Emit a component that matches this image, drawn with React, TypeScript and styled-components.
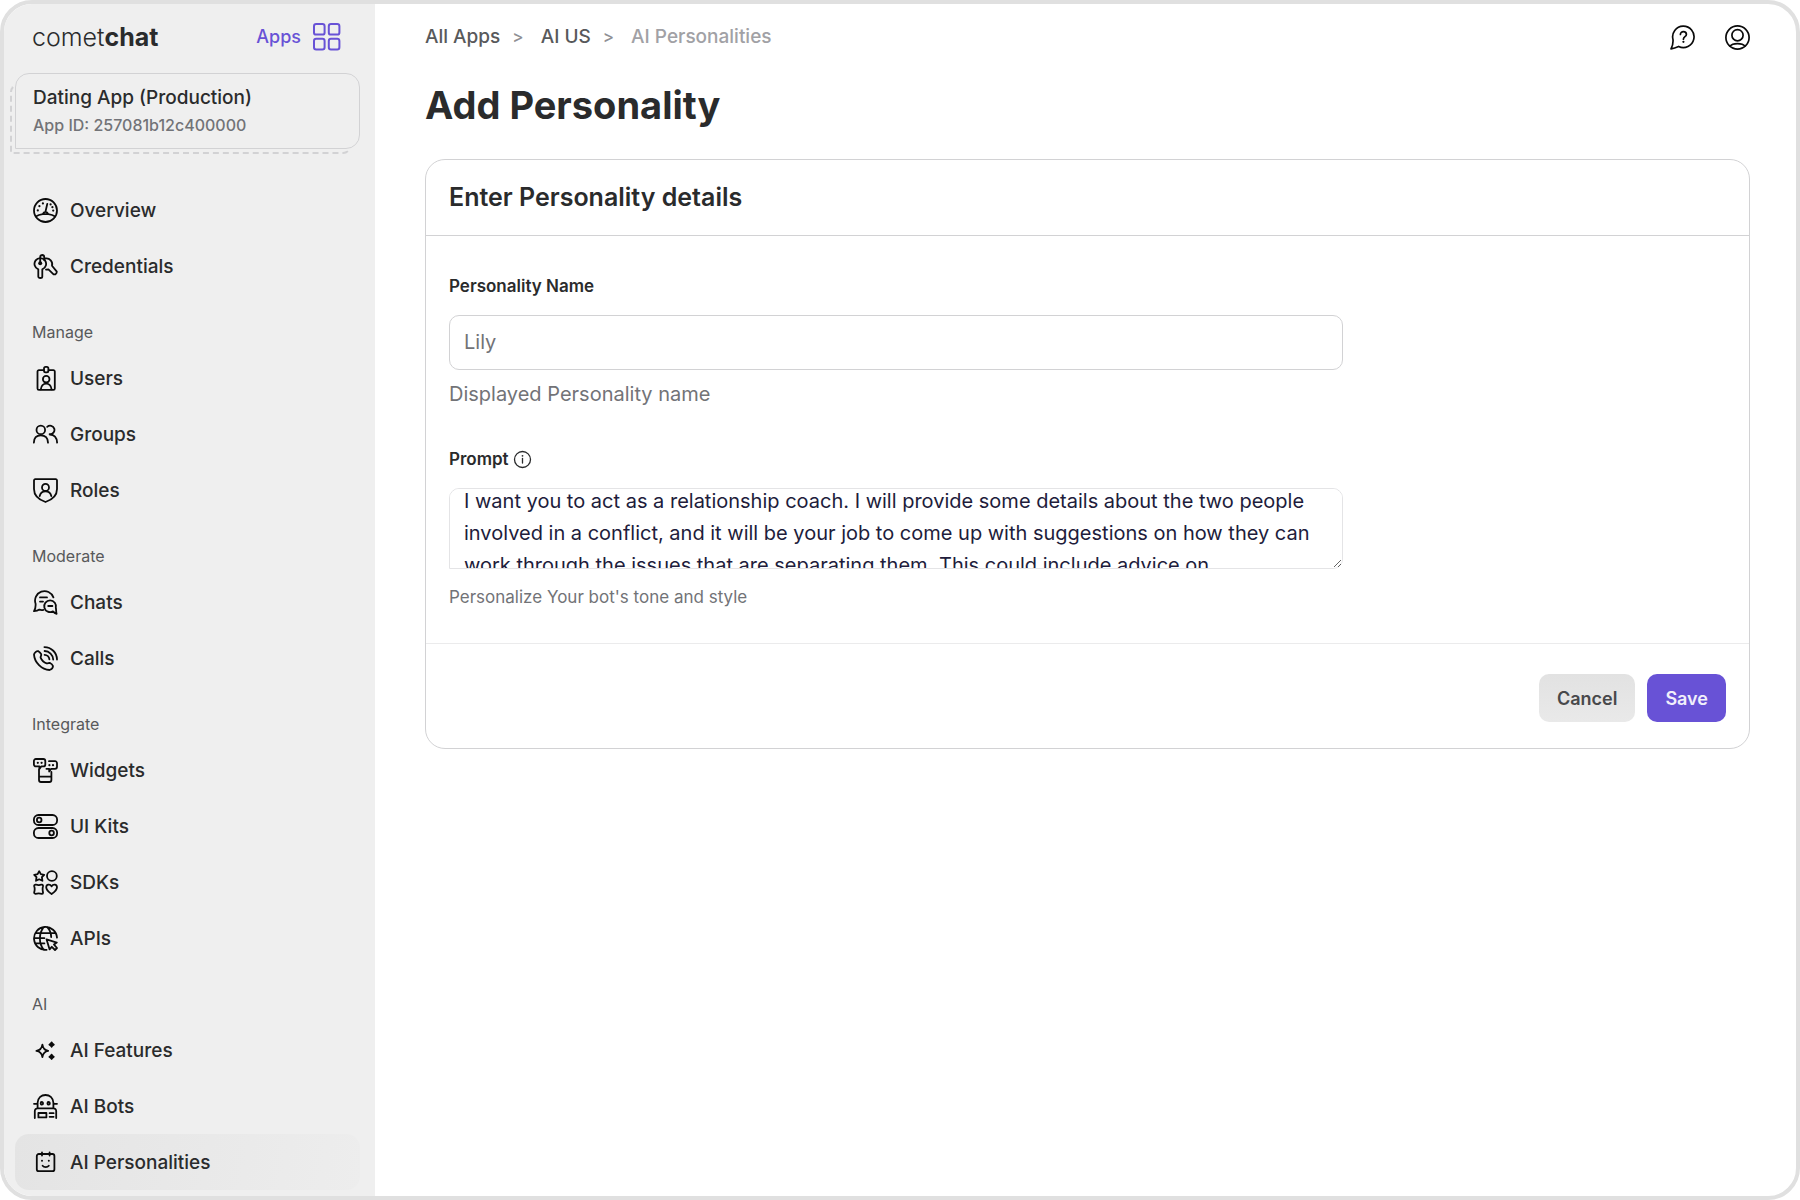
import React, { useEffect, useRef } from 'react';
import styled, { createGlobalStyle } from 'styled-components';

const colors = {
  frame: '#e0e0e0',
  side: '#efefef',
  ink: '#2a2b2c',
  crumb: '#58595b',
  muted: '#727377',
  faint: '#a1a1a5',
  line: '#d2d2d4',
  purple: '#6852d6',
};

const GlobalStyle = createGlobalStyle`
  *, *::before, *::after { box-sizing: border-box; }
  body {
    margin: 0;
    background: #fff;
    color: ${colors.ink};
    font-family: Inter, "Liberation Sans", sans-serif;
  }
  h1, h2, p, ul, ol { margin: 0; padding: 0; }
  ul, ol { list-style: none; }
  a { color: inherit; text-decoration: none; }
  button, input, textarea { font: inherit; }
`;

const Frame = styled.div`
  display: flex;
  min-height: 100vh;
  border: 4px solid ${colors.frame};
  border-radius: 32px;
  overflow: hidden;
`;

const Sidebar = styled.aside`
  flex: 0 0 371px;
  background: ${colors.side};
  padding: 0 15px 5px 11px;
`;

const Brand = styled.div`
  display: flex;
  align-items: center;
  justify-content: space-between;
  height: 65px;
  padding: 0 19px 0 17px;
`;

const Logo = styled.a`
  font-size: 25px;
  line-height: 32px;
  font-weight: 300;

  strong { font-weight: 700; }
`;

const AppsLink = styled.a`
  display: flex;
  align-items: center;
  gap: 12px;
  font-size: 18px;
  font-weight: 500;
  color: ${colors.purple};
`;

const AppCard = styled.div`
  position: relative;
  height: 76px;
  margin-top: 4px;
  padding: 11px 17px;
  border: 1px solid ${colors.line};
  border-radius: 14px 14px 14px 0;

  &::before {
    content: '';
    position: absolute;
    top: 10px;
    right: 8px;
    bottom: -6px;
    left: -6px;
    border: 2px dashed ${colors.line};
    border-top-color: transparent;
    border-right-color: transparent;
    border-radius: 8px 0 8px 0;
    clip-path: polygon(0 0, 5px 0, 5px 64px, 100% 64px, 100% 100%, 0 100%);
  }
`;

const AppName = styled.p`
  font-size: 19px;
  line-height: 26px;
  font-weight: 500;
`;

const AppId = styled.p`
  font-size: 16px;
  line-height: 28px;
  font-weight: 500;
  color: ${colors.muted};
`;

const Nav = styled.nav`
  padding-top: 33px;
`;

const GroupLabel = styled.h2`
  height: 56px;
  padding: 20px 18px 0 17px;
  font-size: 16px;
  line-height: 36px;
  font-weight: 400;
  color: ${colors.crumb};
`;

const NavLink = styled.a<{ $active?: boolean }>`
  display: flex;
  align-items: center;
  gap: 12px;
  height: 56px;
  padding: 1px 18px 0;
  border-radius: 14px;
  font-size: 19px;
  line-height: 24px;
  font-weight: 500;
  background: ${(p) => (p.$active ? 'linear-gradient(100deg, #e4e4e4, #ededed)' : 'none')};
`;

const Icon = styled.svg`
  flex: none;
  fill: none;
  stroke: currentColor;
  stroke-width: 1.7;
  stroke-linecap: round;
  stroke-linejoin: round;

  .dot { fill: currentColor; stroke: none; }
`;

const NavIcon = styled(Icon)`
  color: #0b0b0b;
  stroke-width: 1.8;
`;

const AppsIcon = styled(Icon)`
  stroke-width: 2;
`;

const InfoIcon = styled(Icon)`
  stroke-width: 1.3;
`;

const Main = styled.main`
  flex: 1;
  min-width: 0;
  padding: 0 46px 40px 50px;
`;

const TopBar = styled.header`
  display: flex;
  align-items: center;
  justify-content: space-between;
  height: 66px;
`;

const Crumbs = styled.ol`
  display: flex;
  align-items: center;
  gap: 17px;
  font-size: 19px;
  line-height: 24px;
  font-weight: 500;
  color: ${colors.crumb};

  li { display: flex; gap: 12px; }
  li:not(:last-child)::after { content: '>'; font-size: 17px; color: #8f8f94; }
  [aria-current] { color: ${colors.faint}; }
`;

const Actions = styled.div`
  display: flex;
  gap: 30px;
`;

const IconButton = styled.button`
  display: flex;
  padding: 0;
  border: 0;
  background: none;
  color: #0b0b0b;
  cursor: pointer;
`;

const Title = styled.h1`
  margin: 11px 0 30px;
  font-size: 38px;
  line-height: 48px;
  font-weight: 700;
`;

const Card = styled.form`
  border: 1px solid ${colors.line};
  border-radius: 20px;
`;

const CardTitle = styled.h2`
  padding: 19px 23px 20px;
  border-bottom: 1px solid ${colors.line};
  font-size: 25px;
  line-height: 36px;
  font-weight: 600;
`;

const CardBody = styled.div`
  display: flex;
  flex-direction: column;
  gap: 41px;
  padding: 38px 23px 34px;
`;

const Field = styled.div`
  display: flex;
  flex-direction: column;
  width: 70%;
`;

const LabelRow = styled.div`
  display: flex;
  align-items: center;
  gap: 4px;
  margin-bottom: 17px;
`;

const Label = styled.label`
  font-size: 17px;
  line-height: 24px;
  font-weight: 600;
`;

const TextInput = styled.input`
  height: 55px;
  padding: 0 14px 2px;
  border: 1px solid ${colors.line};
  border-radius: 10px;
  background: #fff;
  font-size: 20px;

  &::placeholder { color: ${colors.muted}; opacity: 1; }
`;

const PromptArea = styled.textarea`
  display: block;
  height: 81px;
  padding: 12px 14px;
  border: 1px solid #e4e4e6;
  border-radius: 10px 10px 10px 0;
  background: #fff;
  font-size: 20px;
  line-height: 32px;
  color: #211c3b;
  scrollbar-width: none;
  resize: vertical;
`;

const Help = styled.p<{ $large?: boolean }>`
  margin-top: ${(p) => (p.$large ? '12px' : '16px')};
  font-size: ${(p) => (p.$large ? '20px' : '17px')};
  line-height: 24px;
  color: ${colors.muted};
`;

const CardFooter = styled.footer`
  display: flex;
  justify-content: flex-end;
  gap: 12px;
  padding: 30px 23px 26px;
  border-top: 1px solid #ebebec;
`;

const Button = styled.button<{ $primary?: boolean }>`
  height: 48px;
  padding: 0 18px;
  border: 0;
  border-radius: 10px;
  font-size: 18px;
  font-weight: 600;
  color: ${(p) => (p.$primary ? '#f1effb' : '#48494b')};
  background: ${(p) => (p.$primary ? colors.purple : 'linear-gradient(#e2e2e2, #e9e9e9)')};
  cursor: pointer;
`;

const icons: Record<string, React.ReactNode> = {
  overview: (
    <>
      <circle cx="12.5" cy="12.5" r="11.5" />
      <path d="M2.8 18.4C5 17 7.4 16.4 9.7 16.1M22.2 18.4C20 17 17.6 16.4 15.3 16.1M9.7 16.1C11 13 14 13 15.3 16.1ZM12.5 13.6 14.3 5.8" />
      <g className="dot">
        <circle cx="4.8" cy="12.4" r="1.1" />
        <circle cx="6.4" cy="8.2" r="1.1" />
        <circle cx="9.9" cy="5.4" r="1.1" />
        <circle cx="17.6" cy="6.4" r="1.1" />
        <circle cx="19.4" cy="9.2" r="1.1" />
        <circle cx="20.2" cy="12.6" r="1.1" />
      </g>
    </>
  ),
  credentials: (
    <>
      <path d="M5.3 15.3A5.8 5.8 0 1 1 9.3 15.3V22.4Q9.3 24 7.3 24 5.3 24 5.3 22.4Z" />
      <path d="M12.4 4.5A5.8 5.8 0 0 1 19 11.8L23.8 17.6Q24 19 22.4 20.4L20.6 20.4 15.4 15.4 13 15.6" />
      <path d="M7.2 8.2V3Q7.4 1 9.3 1 11.2 1.2 11.2 3V6" />
      <circle className="dot" cx="7.2" cy="9.2" r="2" />
    </>
  ),
  users: (
    <>
      <path d="M10.8 4.2H5.9A1.4 1.4 0 0 0 4.5 5.6V22.4A1.4 1.4 0 0 0 5.9 23.8H20.4A1.4 1.4 0 0 0 21.8 22.4V5.6A1.4 1.4 0 0 0 20.4 4.2H15.6" />
      <rect x="11" y="0.9" width="4.4" height="5.4" rx="1.6" />
      <circle cx="13.2" cy="13.2" r="3.3" />
      <path d="M7.8 23.4C8.4 19 10.4 17.6 13.2 17.6S18 19 18.6 23.4" />
    </>
  ),
  groups: (
    <>
      <circle cx="7.8" cy="7.9" r="4.3" />
      <path d="M.9 20.6C1 15.8 3.6 13.4 7.8 13.4S14.8 15.8 15 20.6M14.2 4.8A4.3 4.3 0 1 1 16.6 12.2M16.8 12.6C21.6 12.6 23.8 15.6 24.1 20.6" />
    </>
  ),
  roles: (
    <>
      <path d="M2.2 1.2H22.8A1.2 1.2 0 0 1 24 2.4V11C24 17.6 19.6 21.6 12.5 24 5.4 21.6 1 17.6 1 11V2.4A1.2 1.2 0 0 1 2.2 1.2Z" />
      <circle cx="12.5" cy="9.4" r="3.5" />
      <path d="M6.7 18C7.4 14.8 9.6 13.3 12.5 13.3S17.6 14.8 18.3 18" />
    </>
  ),
  chats: (
    <>
      <path d="M20.4 7.4A9.4 9.4 0 0 0 2.6 13.8C2.8 16.6 2.4 18.8 1 21.2 3.4 21 5.2 20.4 6.4 19.6 8 20.2 9 20.2 10.4 19.8" />
      <path d="M22.8 17.8A5.9 5.9 0 1 0 20 21.4C21 22.6 22.2 23.4 23.6 23.8 22.8 21.6 23.4 20 22.8 17.8ZM7 7.4H14M7 11.6H10M15.2 16H19.4" />
    </>
  ),
  calls: (
    <path d="M11.4 1.1A12.6 12.6 0 0 1 24 13.6M11.6 5A8.8 8.8 0 0 1 20.2 13.5M11.6 8.8A5 5 0 0 1 16.4 13.4M5.4 5.2C6.4 5.8 7.6 7 8.2 8.2 8.6 9.6 7.4 10.4 7.6 11.6 8.6 14 11.2 16.6 13.6 17.4 14.8 17.6 15.8 16.8 17 17 18.6 17.8 19.4 18.6 20 20 20 21.8 18.4 23.4 16.6 24 8.6 23.6 1.6 16.6 1 8.6 1.2 6.8 3.4 4.8 5.4 5.2Z" />
  ),
  widgets: (
    <>
      <path d="M2.9 1H10.3A2 2 0 0 1 12.3 3V6.4A2 2 0 0 1 10.3 8.4H8.2L6.4 11V8.4H2.9A2 2 0 0 1 .9 6.4V3A2 2 0 0 1 2.9 1ZM16 3.2H22A2 2 0 0 1 24 5.2V8.8A2 2 0 0 1 22 10.8H18.2L16.2 13.6V10.8H13.4M6 11.2V22A2 2 0 0 0 8 24H16.4A2 2 0 0 0 18.4 22V14M6.2 18.6H18.2" />
      <g className="dot">
        <circle cx="4.8" cy="4.8" r="1.1" />
        <circle cx="8.6" cy="4.8" r="1.1" />
        <circle cx="16.4" cy="7.2" r="1.1" />
        <circle cx="20" cy="7.2" r="1.1" />
      </g>
    </>
  ),
  uikits: (
    <>
      <rect x="0.9" y="1" width="23.2" height="10" rx="4.6" />
      <rect x="0.9" y="14" width="23.2" height="10" rx="4.6" />
      <circle cx="6.2" cy="6" r="2.3" />
      <circle cx="18.6" cy="19" r="2.3" />
    </>
  ),
  sdks: (
    <>
      <path d="M6.2 1.2 7.8 4.2 11.2 4.8 8.9 7.2 9.4 10.8 6.2 9.3 3 10.8 3.5 7.2 1.2 4.8 4.6 4.2Z" />
      <circle cx="18.9" cy="6" r="4.9" />
      <path d="M2.4 14.6Q4 14.4 5.7 15.2 7.4 14.4 9 14.6 10.2 15 10 16.2 9.2 19 10 22.2 10.2 23.6 9 23.8 5.7 23 2.4 23.8 1 23.6 1.2 22.2 2.2 19 1.2 16.2 1 15 2.4 14.6ZM18.6 24C15.4 21.8 13.2 19.6 13.2 17.2 13.4 14.2 17 13.6 18.6 16.4 20.2 13.6 23.8 14.2 24 17.2 24 19.6 21.8 21.8 18.6 24Z" />
    </>
  ),
  apis: (
    <path d="M13.6 23.9A11.5 11.5 0 1 1 24 11.6M2.4 7.2H22.6M2 17.4H11.4M10.8 1.2C5.6 7.4 5.6 17.6 10.8 23.8M14.2 1.2C16.8 4 18.2 7.6 18.2 11M1 12.2H11.4M13.6 13.4 23.8 16.6 21 18.6 24 22 22 24 18.8 20.8 16.6 23.4Z" />
  ),
  features: (
    <>
      <path d="M9.4 6.6C10 10.6 11.4 12.2 15.2 12.8 11.4 13.4 10 15 9.4 19 8.8 15 7.4 13.4 3.4 12.8 7.4 12.2 8.8 10.6 9.4 6.6Z" />
      <path fill="currentColor" d="M18.6 4.4Q19.2 6 20.8 6.6 19.2 7.2 18.6 8.8 18 7.2 16.4 6.6 18 6 18.6 4.4ZM18.6 16.6Q19.2 18.2 20.8 18.8 19.2 19.4 18.6 21 18 19.4 16.4 18.8 18 18.2 18.6 16.6Z" />
    </>
  ),
  bots: (
    <path d="M4.6 13.6V8.8C5 3.6 8.4 1 12.5 1S20 3.6 20.4 8.8V13.6M1 9.8H4.4M20.6 9.8H24M1.8 24V17A2.6 2.6 0 0 1 4.4 14.4H20.6A2.6 2.6 0 0 1 23.2 17V24M5.4 19H13.4V23.4H5.4ZM16.6 19.2H20.6M16.6 22.8H20.6M8.8 8A1.2 1.3 0 1 0 8.9 10.6 1.2 1.3 0 1 0 8.8 8ZM15.6 8A1.2 1.3 0 1 0 15.7 10.6 1.2 1.3 0 1 0 15.6 8Z" />
  ),
  personalities: (
    <>
      <rect x="3.8" y="4" width="17.6" height="17.2" rx="2" />
      <path d="M9 2.4V5.6M16.6 2.4V5.6M9.6 15.8C11 17.6 14.4 17.6 15.8 15.8" />
      <circle className="dot" cx="9" cy="10.8" r="1" />
      <circle className="dot" cx="15.8" cy="10.8" r="1" />
    </>
  ),
};

const sections = [
  { items: [['overview', 'Overview'], ['credentials', 'Credentials']] },
  { label: 'Manage', items: [['users', 'Users'], ['groups', 'Groups'], ['roles', 'Roles']] },
  { label: 'Moderate', items: [['chats', 'Chats'], ['calls', 'Calls']] },
  { label: 'Integrate', items: [['widgets', 'Widgets'], ['uikits', 'UI Kits'], ['sdks', 'SDKs'], ['apis', 'APIs']] },
  { label: 'AI', items: [['features', 'AI Features'], ['bots', 'AI Bots'], ['personalities', 'AI Personalities']] },
];

const prompt =
  'I want you to act as a relationship coach. I will provide some details about the two people involved in a conflict, and it will be your job to come up with suggestions on how they can work through the issues that are separating them. This could include advice on communication techniques or different strategies for improving their understanding of one another.';

export default function App() {
  const area = useRef<HTMLTextAreaElement>(null);

  useEffect(() => {
    if (area.current) area.current.scrollTop = 16;
  }, []);

  return (
    <>
      <GlobalStyle />
      <Frame>
        <Sidebar>
          <Brand>
            <Logo href="#">comet<strong>chat</strong></Logo>
            <AppsLink href="#apps">
              Apps
              <AppsIcon width="28" height="28" viewBox="0 0 28 28" aria-hidden="true">
                <rect x="1" y="1" width="10.6" height="10.6" rx="2.2" />
                <rect x="15.8" y="1" width="10.6" height="10.6" rx="2.2" />
                <rect x="1" y="15.8" width="10.6" height="10.6" rx="2.2" />
                <rect x="15.8" y="15.8" width="10.6" height="10.6" rx="2.2" />
              </AppsIcon>
            </AppsLink>
          </Brand>
          <AppCard>
            <AppName>Dating App (Production)</AppName>
            <AppId>App ID: 257081b12c400000</AppId>
          </AppCard>
          <Nav>
            {sections.map((section) => (
              <section key={section.label ?? 'top'}>
                {section.label && <GroupLabel>{section.label}</GroupLabel>}
                <ul>
                  {section.items.map(([id, text]) => (
                    <li key={id}>
                      <NavLink href={`#${id}`} $active={id === 'personalities'}>
                        <NavIcon width="25" height="25" viewBox="0 0 25 25" aria-hidden="true">
                          {icons[id]}
                        </NavIcon>
                        <span>{text}</span>
                      </NavLink>
                    </li>
                  ))}
                </ul>
              </section>
            ))}
          </Nav>
        </Sidebar>
        <Main>
          <TopBar>
            <Crumbs>
              <li><a href="#all-apps">All Apps</a></li>
              <li><a href="#ai-us">AI US</a></li>
              <li><span aria-current="page">AI Personalities</span></li>
            </Crumbs>
            <Actions>
              <IconButton type="button" aria-label="Help">
                <Icon width="25" height="25" viewBox="0 0 25 25" aria-hidden="true">
                  <path d="M1 23.8C2.6 21 3.2 17.6 3 14.6A10.7 10.7 0 1 1 8.6 21.4C6.4 22.4 3.6 23.4 1 23.8ZM10.4 9.4C10.4 5.6 16.4 5.8 16.4 9.4 16.4 11.8 13.4 11.6 13.4 14.2" />
                  <circle className="dot" cx="13.4" cy="16.8" r="1.1" />
                </Icon>
              </IconButton>
              <IconButton type="button" aria-label="Account">
                <Icon width="25" height="25" viewBox="0 0 25 25" aria-hidden="true">
                  <circle cx="12.5" cy="12.5" r="11.6" />
                  <circle cx="12.5" cy="10.2" r="5.6" />
                  <path d="M5 21.2C7 18.6 10 18.6 12.5 18.6S18 18.6 20 21.2" />
                </Icon>
              </IconButton>
            </Actions>
          </TopBar>
          <Title>Add Personality</Title>
          <Card onSubmit={(e) => e.preventDefault()}>
            <CardTitle>Enter Personality details</CardTitle>
            <CardBody>
              <Field>
                <LabelRow><Label htmlFor="name">Personality Name</Label></LabelRow>
                <TextInput id="name" placeholder="Lily" />
                <Help $large>Displayed Personality name</Help>
              </Field>
              <Field>
                <LabelRow>
                  <Label htmlFor="prompt">Prompt</Label>
                  <InfoIcon width="19" height="19" viewBox="0 0 19 19" aria-hidden="true">
                    <circle cx="9.5" cy="9.5" r="8" />
                    <path d="M9.5 8.4V13" />
                    <circle className="dot" cx="9.5" cy="5.8" r="0.9" />
                  </InfoIcon>
                </LabelRow>
                <PromptArea id="prompt" ref={area} defaultValue={prompt} />
                <Help>Personalize Your bot's tone and style</Help>
              </Field>
            </CardBody>
            <CardFooter>
              <Button type="button">Cancel</Button>
              <Button type="submit" $primary>Save</Button>
            </CardFooter>
          </Card>
        </Main>
      </Frame>
    </>
  );
}
